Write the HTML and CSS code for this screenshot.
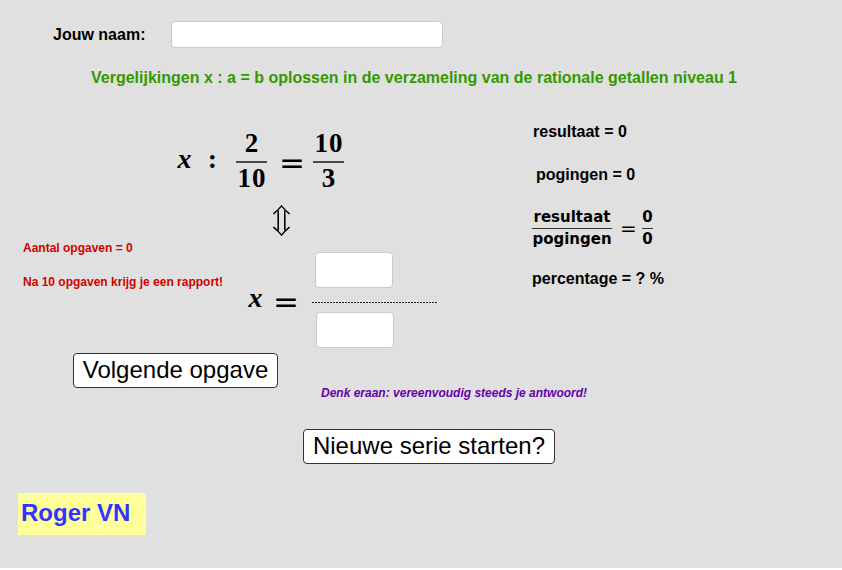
FILE: index.html
```html
<!DOCTYPE html>
<html lang="nl">
<head>
<meta charset="utf-8">
<title>Vergelijkingen x : a = b</title>
<link rel="stylesheet" href="styles.css">
</head>
<body>
<div class="applet">
  <div class="label name-label">Jouw naam:</div>
  <input class="field name-field" type="text" aria-label="Jouw naam">

  <div class="title">Vergelijkingen x : a = b oplossen in de verzameling van de rationale getallen niveau 1</div>

  <div class="eq eq-main">
    <span class="mi box-x">x</span>
    <span class="mi box-colon">:</span>
    <span class="frac frac-a">
      <span class="num mn">2</span>
      <span class="bar"></span>
      <span class="den mn">10</span>
    </span>
    <span class="mo box-eq">=</span>
    <span class="frac frac-b">
      <span class="num mn">10</span>
      <span class="bar"></span>
      <span class="den mn">3</span>
    </span>
  </div>

  <svg class="updown" width="17" height="31" viewBox="0 0 17 31" role="img" aria-label="⇕">
    <path d="M0.8 8.6 Q5 5.2 8.5 0.9 Q12 5.2 16.2 8.6" fill="none" stroke="#000" stroke-width="1.4" stroke-linecap="round" stroke-linejoin="round"/>
    <path d="M0.8 22.4 Q5 25.8 8.5 30.1 Q12 25.8 16.2 22.4" fill="none" stroke="#000" stroke-width="1.4" stroke-linecap="round" stroke-linejoin="round"/>
    <path d="M5.2 5.6 V25.4 M11.8 5.6 V25.4" fill="none" stroke="#000" stroke-width="1.6"/>
  </svg>

  <div class="eq eq-answer">
    <span class="mi box-x">x</span>
    <span class="mo box-eq2">=</span>
  </div>

  <div class="answer-frac">
    <input class="field ans-top" type="text" aria-label="Teller">
    <span class="dash-line"></span>
    <input class="field ans-bottom" type="text" aria-label="Noemer">
  </div>

  <div class="label stat stat-res">resultaat = 0</div>
  <div class="label stat stat-pog">pogingen = 0</div>

  <div class="ratio">
    <span class="sfrac sfrac-a">
      <span class="snum">resultaat</span>
      <span class="sbar"></span>
      <span class="sden">pogingen</span>
    </span>
    <span class="seq">=</span>
    <span class="sfrac sfrac-b">
      <span class="snum">0</span>
      <span class="sbar"></span>
      <span class="sden">0</span>
    </span>
  </div>

  <div class="label stat stat-pct">percentage = ? %</div>

  <div class="red red-count">Aantal opgaven = 0</div>
  <div class="red red-report">Na 10 opgaven krijg je een rapport!</div>

  <button class="btn btn-next" type="button">Volgende opgave</button>

  <div class="hint">Denk eraan: vereenvoudig steeds je antwoord!</div>

  <button class="btn btn-new" type="button">Nieuwe serie starten?</button>

  <div class="author">Roger VN</div>
</div>
</body>
</html>
```

FILE: styles.css
```css
html, body {
  margin: 0;
  padding: 0;
  background: #ffffff;
}

body {
  font-family: "Liberation Sans", Arial, sans-serif;
  color: #000;
}

.applet {
  position: relative;
  width: 842px;
  height: 568px;
  background: #e0e0e0;
  overflow: hidden;
}

.applet > * {
  position: absolute;
}

/* text labels */
.label {
  font-weight: bold;
  font-size: 16px;
  line-height: 16px;
  white-space: nowrap;
  color: #000;
}

.name-label {
  left: 53px;
  top: 27px;
}

.field {
  box-sizing: border-box;
  margin: 0;
  padding: 0 6px;
  background: #fff;
  border: 1px solid #c9c9c9;
  border-radius: 4px;
  font-family: "Liberation Sans", Arial, sans-serif;
  font-size: 16px;
  outline: none;
}

.name-field {
  left: 171px;
  top: 21px;
  width: 272px;
  height: 27px;
}

.title {
  left: 91px;
  top: 70px;
  font-weight: bold;
  font-size: 16px;
  line-height: 16px;
  color: #339900;
  white-space: nowrap;
}

/* main equation */
.eq {
  display: flex;
  align-items: center;
}

.eq-main {
  left: 176px;
  top: 131px;
  height: 62px;
}

.mi {
  font-family: "Liberation Serif", "Times New Roman", serif;
  font-style: italic;
  font-weight: bold;
  font-size: 28px;
  line-height: 28px;
  text-align: center;
  margin-bottom: 6px;
}

.mn {
  font-family: "Liberation Serif", "Times New Roman", serif;
  font-weight: bold;
  font-size: 27px;
  line-height: 20px;
  letter-spacing: 1px;
}

.mo {
  font-family: "DejaVu Sans", sans-serif;
  font-size: 31px;
  line-height: 31px;
  text-align: center;
}

.box-x {
  width: 17px;
}

.box-colon {
  font-style: normal;
  width: 13px;
  margin-left: 13px;
}

.frac {
  display: flex;
  flex-direction: column;
  align-items: center;
  width: 31px;
  padding-bottom: 3px;
}

.frac .num {
  margin-bottom: 8px;
  padding-left: 1px;
}

.frac .den {
  margin-top: 5px;
  padding-left: 1px;
}

.bar {
  align-self: stretch;
  height: 2px;
  background: #4a4a4a;
}

.frac-a {
  margin-left: 17px;
}

.box-eq {
  width: 21px;
  margin-left: 12px;
}

.frac-b {
  margin-left: 13px;
}

.updown {
  left: 273px;
  top: 205px;
  display: block;
}

/* answer equation */
.eq-answer {
  left: 247px;
  top: 281px;
  height: 40px;
}

.box-eq2 {
  width: 22px;
  margin-left: 9px;
}

.answer-frac {
  left: 312px;
  top: 252px;
  display: flex;
  flex-direction: column;
  width: 125px;
}

.ans-top,
.ans-bottom {
  position: static;
  width: 78px;
  height: 36px;
}

.ans-top {
  margin-left: 3px;
  margin-bottom: 14px;
}

.ans-bottom {
  margin-left: 4px;
  margin-top: 9px;
}

.dash-line {
  display: block;
  height: 1px;
  background: repeating-linear-gradient(90deg, #222 0 2px, transparent 2px 3px);
}

/* statistics */
.stat-res {
  left: 533px;
  top: 124px;
}

.stat-pog {
  left: 536px;
  top: 167px;
}

.stat-pct {
  left: 532px;
  top: 271px;
}

.ratio {
  left: 532px;
  top: 209px;
  display: flex;
  align-items: center;
}

.sfrac {
  display: flex;
  flex-direction: column;
  align-items: center;
  font-family: "DejaVu Sans", sans-serif;
  font-weight: bold;
  font-size: 15px;
}

.snum {
  line-height: 16px;
  margin-bottom: 3px;
}

.sden {
  line-height: 16px;
  margin-top: 2px;
}

.sbar {
  align-self: stretch;
  height: 1px;
  background: #333;
}

.sfrac-a {
  width: 80px;
}

.seq {
  font-family: "DejaVu Sans", sans-serif;
  font-size: 20px;
  line-height: 20px;
  width: 14px;
  margin-left: 8px;
  text-align: center;
}

.sfrac-b {
  width: 11px;
  margin-left: 8px;
}

/* red notes */
.red {
  font-weight: bold;
  font-size: 12px;
  line-height: 12px;
  color: #d40000;
  white-space: nowrap;
}

.red-count {
  left: 23px;
  top: 242px;
}

.red-report {
  left: 23px;
  top: 276px;
}

.hint {
  left: 321px;
  top: 387px;
  font-weight: bold;
  font-style: italic;
  font-size: 12px;
  line-height: 12px;
  color: #6600aa;
  white-space: nowrap;
}

/* buttons */
.btn {
  box-sizing: border-box;
  margin: 0;
  padding: 0 0 2px;
  display: flex;
  align-items: center;
  justify-content: center;
  background: #fff;
  border: 1px solid #333;
  border-radius: 4px;
  font-family: "Liberation Sans", Arial, sans-serif;
  font-size: 24px;
  line-height: 24px;
  color: #000;
  white-space: nowrap;
}

.btn-next {
  left: 73px;
  top: 353px;
  width: 205px;
  height: 35px;
}

.btn-new {
  left: 303px;
  top: 429px;
  width: 252px;
  height: 35px;
}

.author {
  left: 18px;
  top: 493px;
  width: 128px;
  height: 42px;
  box-sizing: border-box;
  padding: 8px 0 0 3px;
  background: #ffff99;
  color: #3333ff;
  font-weight: bold;
  font-size: 24px;
  line-height: 24px;
  white-space: nowrap;
}
```
